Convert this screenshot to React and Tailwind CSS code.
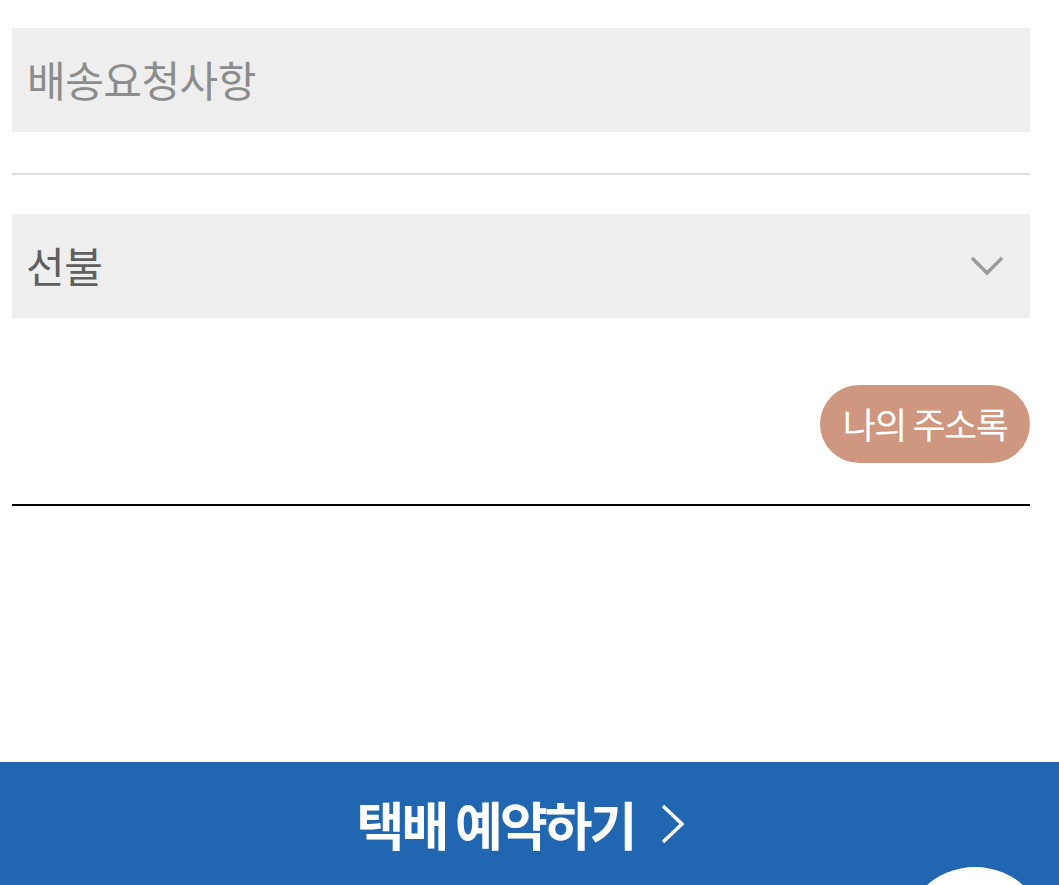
export default function App() {
  const font = { fontFamily: '"Noto Sans CJK KR", "Noto Sans", sans-serif' };
  return (
    <div className="relative w-[1059px] h-[885px] overflow-hidden bg-white" style={font}>
      <div className="pl-[12px] pr-[29px] pt-[28px]">
        <div className="h-[104px] bg-[#eeeeee] flex items-center pl-[15px]">
          <input
            className="w-full bg-transparent outline-none text-[42px] tracking-[-0.5px] text-[#333] placeholder:text-[#8c8c8c] -mt-[4px]"
            placeholder="배송요청사항"
            style={font}
          />
        </div>
        <div className="mt-[41px] h-[2px] bg-[#dddddd]" />
        <div className="mt-[39px] h-[104px] bg-[#eeeeee] flex items-center justify-between pl-[14px] pr-[26px]">
          <span className="text-[42px] tracking-[-0.5px] text-[#5f5f5f] -mt-[4px]">선불</span>
          <svg width="34" height="20" viewBox="0 0 34 20" fill="none">
            <path d="M2 2 L17 17 L32 2" stroke="#9a9a9a" strokeWidth="3.5" />
          </svg>
        </div>
        <div className="mt-[67px] flex justify-end">
          <button className="h-[78px] w-[210px] rounded-full bg-[#cf977f] text-white text-[36px] tracking-[-1.5px] flex items-center justify-center pb-[2px]">
            나의 주소록
          </button>
        </div>
        <div className="mt-[41px] h-[2px] bg-black" />
      </div>
      <div className="absolute left-0 right-0 top-[762px] h-[123px] bg-[#2166b0] flex items-start justify-center pt-[34px]">
        <div className="flex items-center gap-[26px] -ml-[16px]">
          <span className="text-white font-bold text-[52px] leading-[56px] tracking-[-3px] whitespace-pre">택배 예약하기</span>
          <svg width="26" height="42" viewBox="0 0 26 42" fill="none">
            <path d="M3 3 L22 21 L3 39" stroke="white" strokeWidth="3.5" />
          </svg>
        </div>
      </div>
      <div className="absolute left-[902px] top-[867px] w-[146px] h-[146px] rounded-full bg-white" />
    </div>
  );
}
